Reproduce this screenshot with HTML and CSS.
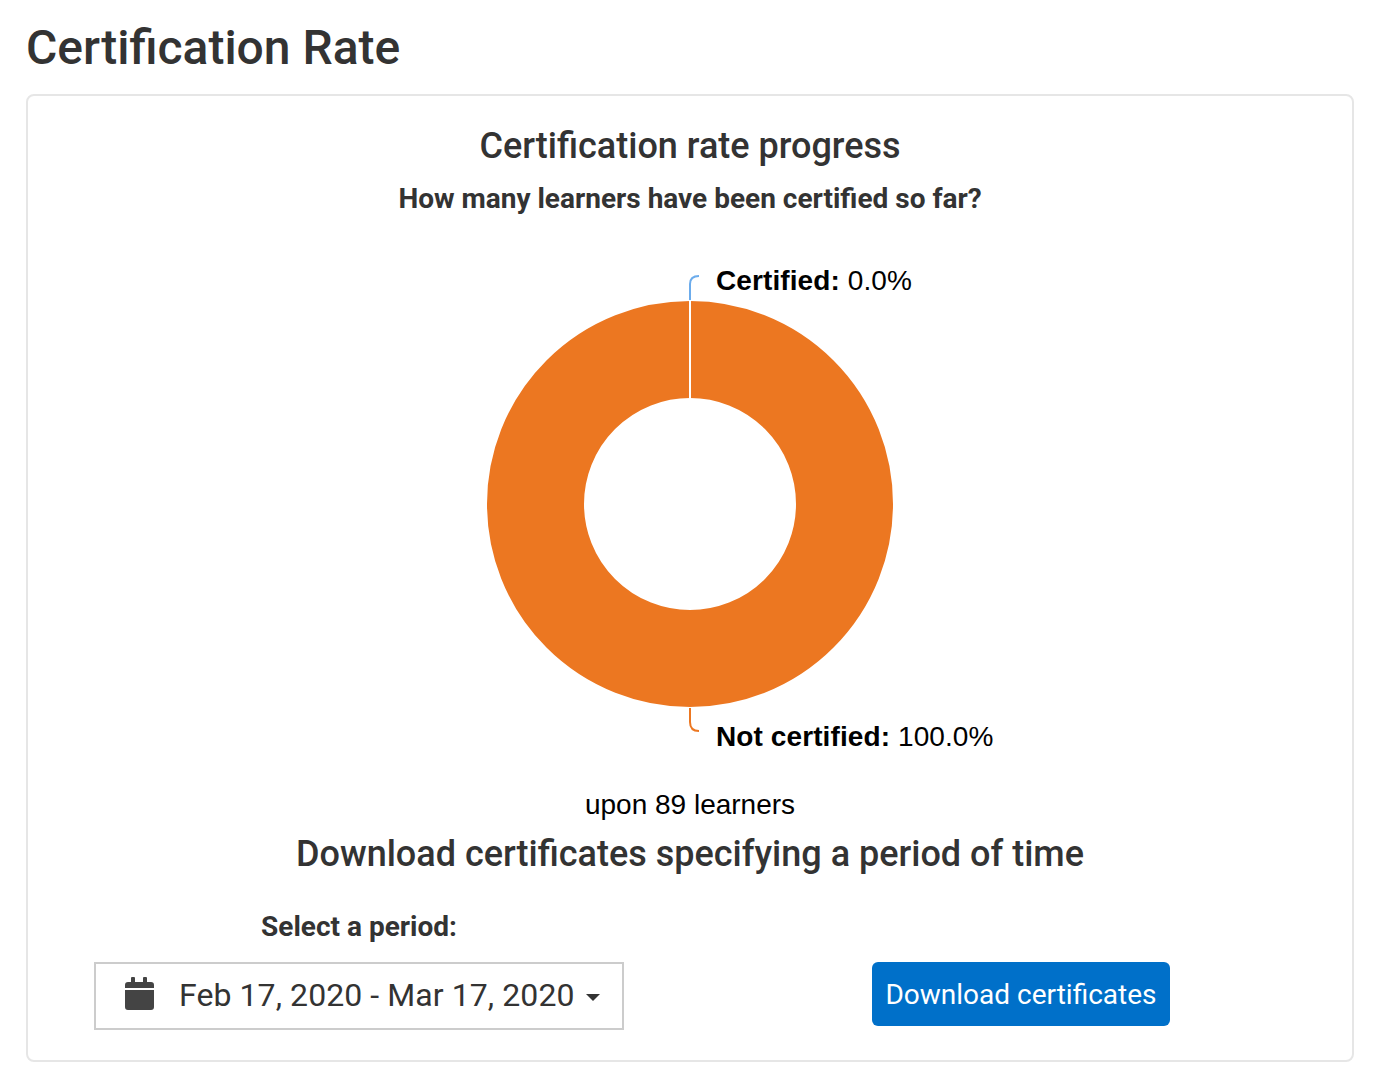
FILE: index.html
```html
<!DOCTYPE html>
<html lang="en">
  <head>
    <meta charset="UTF-8" />
    <title>Certification Rate</title>
    <link rel="stylesheet" href="styles.css">
  </head>
  <body>
    <h1 class="page-title">Certification Rate</h1>
    <section class="card">
      <h2 class="chart-title">Certification rate progress</h2>
      <p class="chart-subtitle">How many learners have been certified so far?</p>
      <svg class="donut" width="1324" height="563" viewBox="0 0 1324 563">
        <!-- svg origin is 28,226 on the page -->
        <circle cx="662" cy="278" r="154.5" fill="none" stroke="#ec7721" stroke-width="97" />
        <path d="M662 75V172" stroke="#fff" stroke-width="2" />
        <path d="M662 74V58Q662 50 671 50" fill="none" stroke="#6cacec" stroke-width="2" />
        <path d="M662 482V496Q662 505 671 505" fill="none" stroke="#ec7721" stroke-width="2" />
        <text class="donut-label" x="688" y="64"><tspan class="donut-label-name">Certified:</tspan> 0.0%</text>
        <text class="donut-label" x="688" y="520"><tspan class="donut-label-name">Not certified:</tspan> 100.0%</text>
      </svg>
      <p class="learners">upon 89 learners</p>
      <h2 class="download-title">Download certificates specifying a period of time</h2>
      <div class="download-row">
        <div class="period">
          <label class="period-label">Select a period:</label>
          <div class="period-picker">
            <svg class="calendar-icon" width="29" height="33" viewBox="0 0 29 33">
              <path fill="#444" d="M6 1a1 1 0 0 1 1-1h2a1 1 0 0 1 1 1v4h8V1a1 1 0 0 1 1-1h2a1 1 0 0 1 1 1v4h4a3 3 0 0 1 3 3v3H0V8a3 3 0 0 1 3-3h3zM0 13h29v17a3 3 0 0 1-3 3H3a3 3 0 0 1-3-3z" />
            </svg>
            <span class="period-text">Feb 17, 2020 - Mar 17, 2020</span>
            <span class="caret"></span>
          </div>
        </div>
        <a href="#" class="btn">Download certificates</a>
      </div>
    </section>
  </body>
</html>
```

FILE: styles.css
```css
html,
body {
  margin: 0;
  padding: 0;
  background-color: #fff;
  color: #333;
  font-family: Roboto, sans-serif;
}

body {
  padding: 0 22px 0 26px;
  height: 1082px;
  overflow: hidden;
}

.page-title {
  margin: 0;
  padding-top: 20px;
  height: 94px;
  box-sizing: border-box;
  font-size: 48px;
  line-height: 56px;
  font-weight: 500;
}

.card {
  box-sizing: border-box;
  height: 968px;
  border: 2px solid #e6e6e6;
  border-radius: 8px;
  text-align: center;
}

.chart-title {
  margin: 28px 0 0;
  font-size: 36px;
  line-height: 44px;
  font-weight: 500;
}

.chart-subtitle {
  margin: 14px 0 10px;
  font-size: 28px;
  line-height: 34px;
  font-weight: 700;
}

.donut {
  display: block;
}

.donut-label {
  font-family: "Liberation Sans", Arial, sans-serif;
  font-size: 28px;
  letter-spacing: 0.1px;
  fill: #000;
}

.donut-label-name {
  font-weight: 700;
}

.learners {
  margin: 0;
  font-family: "Liberation Sans", Arial, sans-serif;
  font-size: 28px;
  line-height: 32px;
  color: #000;
}

.download-title {
  margin: 11px 0 0;
  font-size: 36px;
  line-height: 44px;
  font-weight: 500;
}

.download-row {
  display: flex;
  align-items: flex-end;
  margin: 34px 0 0 66px;
}

.period-label {
  display: block;
  font-size: 28px;
  line-height: 34px;
  font-weight: 700;
}

.period-picker {
  display: flex;
  align-items: center;
  box-sizing: border-box;
  width: 530px;
  height: 68px;
  margin-top: 18px;
  padding-left: 29px;
  border: 2px solid #ccc;
  font-size: 32px;
  letter-spacing: 0.08px;
  color: #333;
}

.calendar-icon {
  margin-right: 25px;
  margin-top: -5px;
}

.period-text {
  margin-top: -3px;
}

.caret {
  margin-left: 11px;
  margin-top: 2px;
  border-top: 7px solid #333;
  border-left: 7px solid transparent;
  border-right: 7px solid transparent;
}

.btn {
  display: block;
  box-sizing: border-box;
  width: 298px;
  height: 64px;
  margin: 0 0 4px 248px;
  border-radius: 6px;
  background-color: #0070c9;
  color: #fff;
  font-size: 28px;
  line-height: 65px;
  text-align: center;
  text-decoration: none;
}
```
